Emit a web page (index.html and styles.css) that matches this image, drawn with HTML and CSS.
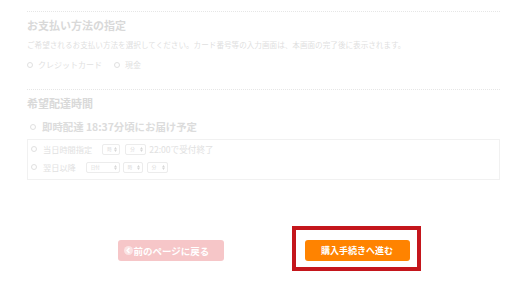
FILE: index.html
```html
<!DOCTYPE html>
<html lang="ja">
<head>
<meta charset="utf-8">
<title>購入手続き</title>
<link rel="stylesheet" href="styles.css">
</head>
<body>
<div class="page">
  <section class="sec sec-pay">
    <h2 class="sec-title">お支払い方法の指定</h2>
    <p class="sec-desc">ご希望されるお支払い方法を選択してください。カード番号等の入力画面は、本画面の完了後に表示されます。</p>
    <div class="pay-opts">
      <label class="opt"><span class="radio"></span>クレジットカード</label>
      <label class="opt"><span class="radio"></span>現金</label>
    </div>
  </section>
  <section class="sec sec-time">
    <h2 class="sec-title">希望配達時間</h2>
    <div class="now"><span class="radio"></span>即時配達 18:37分頃にお届け予定</div>
    <div class="time-box">
      <div class="trow">
        <span class="radio"></span><span class="tlabel">当日時間指定</span>
        <span class="sel w18"><span>時</span><svg class="arr" viewBox="0 0 4 7"><path d="M0 3 2 0 4 3ZM0 4 2 7 4 4Z"/></svg></span>
        <span class="sel w21 g5"><span>分</span><svg class="arr" viewBox="0 0 4 7"><path d="M0 3 2 0 4 3ZM0 4 2 7 4 4Z"/></svg></span>
        <span class="tnote">22:00で受付終了</span>
      </div>
      <div class="trow">
        <span class="radio"></span><span class="tlabel">翌日以降</span>
        <span class="sel w34"><span>日付</span><svg class="arr" viewBox="0 0 4 7"><path d="M0 3 2 0 4 3ZM0 4 2 7 4 4Z"/></svg></span>
        <span class="sel w20 g3"><span>時</span><svg class="arr" viewBox="0 0 4 7"><path d="M0 3 2 0 4 3ZM0 4 2 7 4 4Z"/></svg></span>
        <span class="sel w21 g4"><span>分</span><svg class="arr" viewBox="0 0 4 7"><path d="M0 3 2 0 4 3ZM0 4 2 7 4 4Z"/></svg></span>
      </div>
    </div>
  </section>
  <div class="actions">
    <a class="btn btn-back"><span class="back-ico"><svg viewBox="0 0 8 8"><path d="M4.8 1.8 2.8 4 4.8 6.2" fill="none" stroke="#fff" stroke-width="1.3"/></svg></span>前のページに戻る</a>
    <div class="hl"><a class="btn btn-next">購入手続きへ進む</a></div>
  </div>
</div>
</body>
</html>
```

FILE: styles.css
```css
* { box-sizing: border-box; margin: 0; padding: 0; }
html, body { background: #fff; }
body {
  margin: 0;
  font-family: "Noto Sans CJK JP", "Noto Sans", sans-serif;
  color: #e1e1e1;
}
.page { width: 473px; margin: 0 auto; padding: 11px 0 24px; }
.sec { border-top: 1px dotted #e6e6e6; }
.sec-title {
  margin-top: 5px;
  font-size: 11px;
  font-weight: 700;
  line-height: 16px;
  color: #d9d9d9;
}
.sec-desc {
  margin-top: 6px;
  font-size: 7.6px;
  line-height: 12px;
  white-space: nowrap;
  color: #dfdfdf;
}
.pay-opts {
  display: flex;
  gap: 12px;
  margin-top: 8px;
  padding-bottom: 18px;
  font-size: 8px;
  line-height: 12px;
}
.opt { display: flex; align-items: center; gap: 5px; }
.radio {
  flex: none;
  width: 6px;
  height: 6px;
  border: 1px solid #e0e0e0;
  border-radius: 50%;
}
.now {
  display: flex;
  align-items: center;
  gap: 6px;
  margin-top: 9px;
  padding-left: 3px;
  font-size: 10.4px;
  font-weight: 700;
  line-height: 14px;
  color: #dcdcdc;
}
.time-box {
  margin-top: 5px;
  border: 1px solid #f1f1f1;
  padding: 2px 3px 5px;
  display: flex;
  flex-direction: column;
  gap: 4px;
}
.trow {
  display: flex;
  align-items: center;
  height: 14px;
  font-size: 8.2px;
  white-space: nowrap;
}
.trow .radio { margin-right: 6px; }
.tlabel { margin-right: 10px; }
.sel {
  display: flex;
  align-items: center;
  justify-content: space-between;
  height: 11px;
  padding: 0 2px 0 4px;
  border: 1px solid #ececec;
  border-radius: 2px;
  font-size: 4.5px;
  color: #d8d8d8;
}
.arr { width: 3px; height: 5px; fill: #d6d6d6; }
.w18 { width: 18px; }
.w20 { width: 20px; }
.w21 { width: 21px; }
.w34 { width: 34px; }
.g3 { margin-left: 3px; }
.g4 { margin-left: 4px; }
.g5 { margin-left: 5px; }
.tnote { margin-left: 3px; font-size: 8.6px; }
.actions {
  display: flex;
  justify-content: center;
  align-items: flex-start;
  gap: 81px;
  margin-top: 60px;
}
.btn {
  display: flex;
  align-items: center;
  justify-content: center;
  height: 21px;
  border-radius: 3px;
  color: #fff;
  font-weight: 700;
  white-space: nowrap;
}
.btn-back {
  width: 106px;
  justify-content: flex-start;
  padding-left: 6px;
  gap: 1px;
  background: #f6c6c8;
  font-size: 9.5px;
}
.back-ico {
  display: flex;
  width: 9px;
  height: 9px;
  border-radius: 50%;
  background: rgba(255, 255, 255, 0.5);
}
.back-ico svg { width: 9px; height: 9px; }
.btn-next {
  width: 105px;
  background: #ff8300;
  font-size: 9px;
}
.hl {
  margin: -14px -11px -10px -13px;
  padding: 10px 7px 6px 9px;
  border: 4px solid #c4161c;
}
```
